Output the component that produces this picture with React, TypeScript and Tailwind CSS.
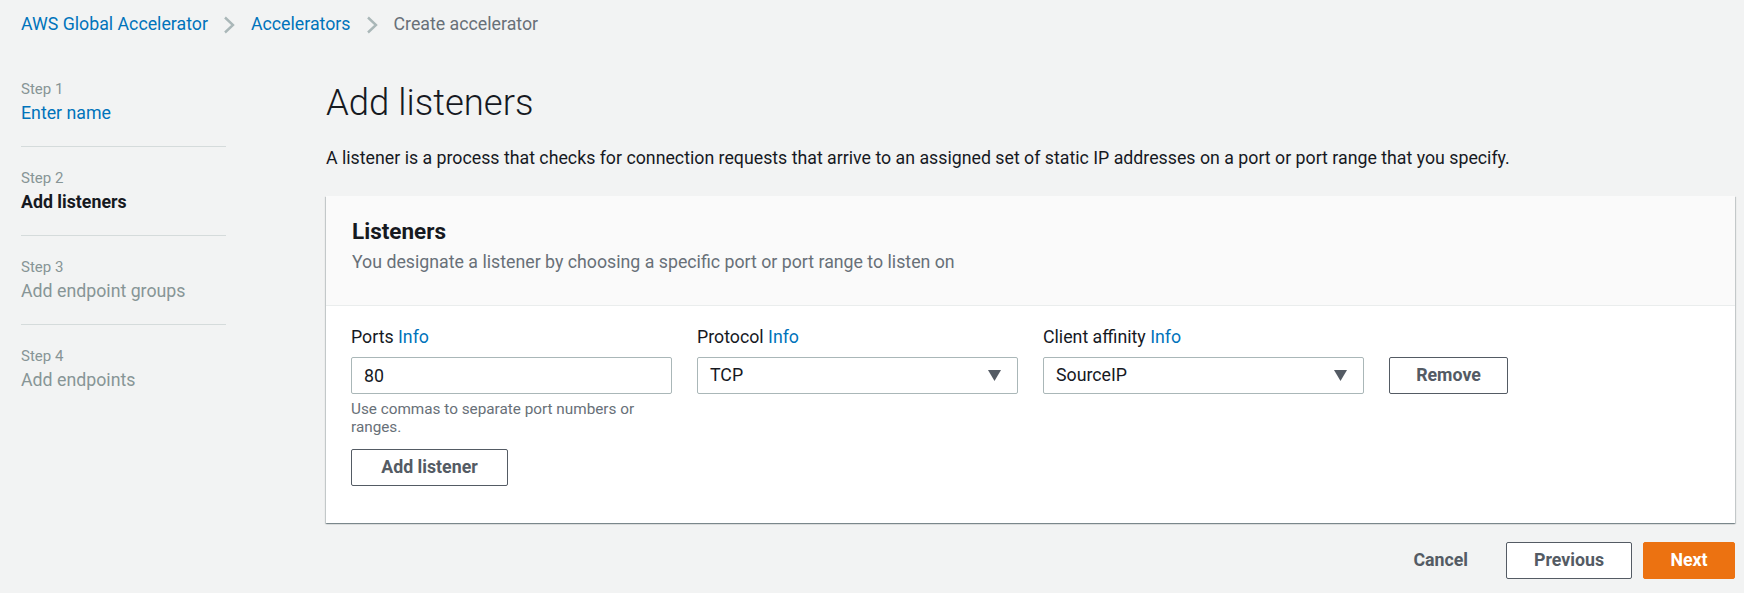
import React from 'react';

const steps = [
  { step: 'Step 1', name: 'Enter name', state: 'done' },
  { step: 'Step 2', name: 'Add listeners', state: 'current' },
  { step: 'Step 3', name: 'Add endpoint groups', state: 'todo' },
  { step: 'Step 4', name: 'Add endpoints', state: 'todo' },
];

const Chevron = () => (
  <svg width="13" height="18" viewBox="0 0 13 18" className="mx-[15px]">
    <polyline points="2,1.5 10,9 2,16.5" fill="none" stroke="#aab7b8" strokeWidth="2.4" />
  </svg>
);

const Caret = () => (
  <svg width="13" height="11" viewBox="0 0 13 11">
    <polygon points="0,0 13,0 6.5,11" fill="#545b64" />
  </svg>
);

const Select = ({ value }: { value: string }) => (
  <div className="flex h-[37px] w-[321px] items-center justify-between rounded-[2px] border border-[#aab7b8] bg-white pl-[12px] pr-[16px] text-[17.75px] text-[#16191f]">
    <span>{value}</span>
    <Caret />
  </div>
);

const Field = ({ label, children }: { label: string; children: React.ReactNode }) => (
  <div className="flex flex-col">
    <div className="h-[24px] text-[17.75px] leading-[24px] text-[#16191f]">
      {label} <span className="text-[#0073bb]">Info</span>
    </div>
    <div className="mt-[8px]">{children}</div>
  </div>
);

export default function App() {
  return (
    <div className="min-h-[593px] bg-[#f2f3f3] font-['Roboto',sans-serif]">
      <nav className="flex h-[49px] items-center pl-[21px] text-[17.75px]">
        <span className="text-[#0073bb]">AWS Global Accelerator</span>
        <Chevron />
        <span className="text-[#0073bb]">Accelerators</span>
        <Chevron />
        <span className="text-[#687078]">Create accelerator</span>
      </nav>

      <div className="flex">
        <aside className="ml-[21px] mt-[9px] w-[205px] shrink-0">
          {steps.map((s, i) => (
            <div key={s.step} className={i < steps.length - 1 ? 'border-b border-[#d5dbdb] py-[20px]' : 'py-[20px]'}>
              <div className="text-[15px] leading-[22px] text-[#879596]">{s.step}</div>
              <div
                className={
                  s.state === 'done'
                    ? 'text-[17.75px] leading-[26px] text-[#0073bb]'
                    : s.state === 'current'
                    ? 'text-[17.75px] font-bold leading-[26px] text-[#16191f]'
                    : 'text-[17.75px] leading-[26px] text-[#879596]'
                }
              >
                {s.name}
              </div>
            </div>
          ))}
        </aside>

        <main className="ml-[100px] mr-[9px] mt-[33px] flex-1">
          <h1 className="text-[36.5px] font-light leading-[42px] text-[#16191f]">Add listeners</h1>
          <p className="mt-[22px] text-[17.75px] leading-[24px] text-[#16191f]">
            A listener is a process that checks for connection requests that arrive to an assigned set of static IP addresses on a port or port range that you specify.
          </p>

          <section className="mt-[26px] bg-white shadow-[0_1px_1px_0_rgba(0,28,36,0.3),1px_1px_1px_0_rgba(0,28,36,0.15),-1px_1px_1px_0_rgba(0,28,36,0.15)]">
            <div className="border-b border-[#eaeded] bg-[#fafafa] px-[26px] pb-[31px] pt-[22px]">
              <h2 className="text-[22.5px] font-bold leading-[26px] text-[#16191f]">Listeners</h2>
              <p className="mt-[6px] text-[17.75px] leading-[24px] text-[#687078]">
                You designate a listener by choosing a specific port or port range to listen on
              </p>
            </div>

            <div className="px-[25px] pb-[37px] pt-[19px]">
              <div className="flex items-start gap-[25px]">
                <Field label="Ports">
                  <input
                    defaultValue="80"
                    className="h-[37px] w-[321px] rounded-[2px] border border-[#aab7b8] bg-white px-[12px] text-[17.75px] text-[#16191f] outline-none"
                  />
                  <div className="mt-[6px] w-[300px] text-[15.3px] leading-[18px] text-[#687078]">
                    Use commas to separate port numbers or ranges.
                  </div>
                </Field>
                <Field label="Protocol">
                  <Select value="TCP" />
                </Field>
                <Field label="Client affinity">
                  <Select value="SourceIP" />
                </Field>
                <div className="mt-[32px]">
                  <button className="h-[37px] w-[119px] rounded-[2px] border border-[#545b64] bg-white text-[17.75px] font-bold text-[#545b64]">
                    Remove
                  </button>
                </div>
              </div>
              <button className="mt-[13px] h-[37px] w-[157px] rounded-[2px] border border-[#545b64] bg-white text-[17.75px] font-bold text-[#545b64]">
                Add listener
              </button>
            </div>
          </section>

          <div className="mt-[19px] flex items-center justify-end gap-[11px]">
            <button className="mr-[27px] text-[17.75px] font-bold text-[#545b64]">Cancel</button>
            <button className="h-[37px] w-[126px] rounded-[2px] border border-[#545b64] bg-white text-[17.75px] font-bold text-[#545b64]">
              Previous
            </button>
            <button className="h-[37px] w-[92px] rounded-[2px] border border-[#ec7211] bg-[#ec7211] text-[17.75px] font-bold text-white">
              Next
            </button>
          </div>
        </main>
      </div>
    </div>
  );
}
